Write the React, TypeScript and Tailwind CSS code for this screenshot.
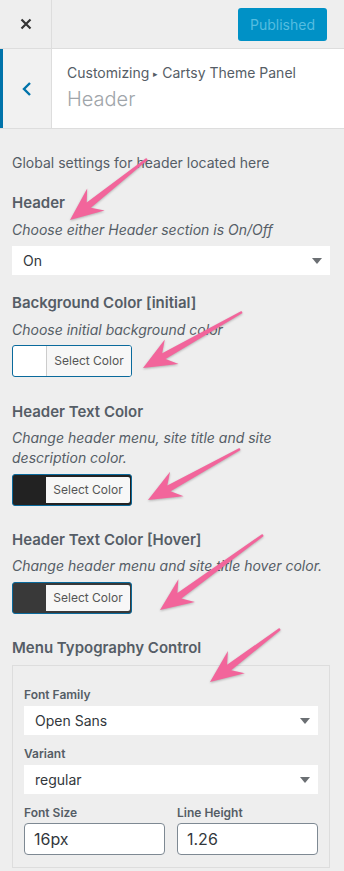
import React from "react";

type Pt = [number, number, number, number];

const arrows: Pt[] = [
  [147, 159, 70, 220],
  [242, 312, 143, 368],
  [240, 449, 148, 500],
  [263, 535, 160, 610],
  [280, 629, 210, 682],
];

function arrowPoints([x1, y1, x2, y2]: Pt): string {
  const dx = x2 - x1;
  const dy = y2 - y1;
  const len = Math.hypot(dx, dy);
  const ux = dx / len;
  const uy = dy / len;
  const nx = -uy;
  const ny = ux;
  const L = 30;
  const W = 14;
  const bx = x2 - ux * L;
  const by = y2 - uy * L;
  const sx = bx + ux * 6;
  const sy = by + uy * 6;
  const p = (x: number, y: number) => `${x.toFixed(1)},${y.toFixed(1)}`;
  return [
    p(x1 + nx * 1.2, y1 + ny * 1.2),
    p(sx + nx * 3.4, sy + ny * 3.4),
    p(bx + nx * W - ux * 3, by + ny * W - uy * 3),
    p(x2, y2),
    p(bx - nx * W - ux * 3, by - ny * W - uy * 3),
    p(sx - nx * 3.4, sy - ny * 3.4),
    p(x1 - nx * 1.2, y1 - ny * 1.2),
  ].join(" ");
}

const font = { fontFamily: "Inter, 'Noto Sans', sans-serif" };

function Caret() {
  return (
    <svg width="10" height="6" viewBox="0 0 10 6" className="shrink-0">
      <path d="M0 0 L10 0 L5 6 Z" fill="#6b6f73" />
    </svg>
  );
}

function SelectBox({ value }: { value: string }) {
  return (
    <div className="flex h-[29px] items-center justify-between bg-white pl-[11px] pr-[8px] text-[14px] text-[#32373c]">
      <span>{value}</span>
      <Caret />
    </div>
  );
}

function ColorButton({ color, dark }: { color: string; dark?: boolean }) {
  return (
    <div
      className="flex h-[32px] w-[120px] rounded-[3px] border border-[#0a6a9c] overflow-hidden"
      style={{ backgroundColor: color }}
    >
      <div className="w-[33px]" />
      {dark ? (
        <div className="my-[2px] mr-[1px] flex flex-1 items-center justify-center rounded-r-[2px] bg-[#f7f7f7] text-[12px] text-[#555]">
          Select Color
        </div>
      ) : (
        <div className="flex flex-1 items-center justify-center border-l border-[#ccc] bg-[#f7f7f7] text-[12px] text-[#555]">
          Select Color
        </div>
      )}
    </div>
  );
}

export default function App() {
  return (
    <div className="relative h-[871px] w-[344px] overflow-hidden bg-[#eeeeee]" style={font}>
      {/* top bar */}
      <div className="flex h-[49px] border-b border-[#dddddd] bg-[#eeeeee]">
        <div className="flex w-[52px] items-center justify-center border-r border-[#dddddd]">
          <svg width="12" height="12" viewBox="0 0 12 12">
            <path d="M1.5 1.5 L10.5 10.5 M10.5 1.5 L1.5 10.5" stroke="#333" strokeWidth="2.2" strokeLinecap="butt" />
          </svg>
        </div>
        <div className="flex flex-1 items-start justify-end pr-[17px] pt-[8px]">
          <div className="flex h-[33px] w-[89px] items-center justify-center rounded-[3px] bg-[#0091c6] text-[14px] text-[#55bde0]">
            Published
          </div>
        </div>
      </div>

      {/* panel header */}
      <div className="flex h-[80px] border-b border-[#dddddd] bg-white">
        <div className="w-[3px] bg-[#0073aa]" />
        <div className="flex w-[49px] items-center justify-center border-r border-[#dddddd] bg-[#f1f1f1]">
          <svg width="10" height="16" viewBox="0 0 10 16">
            <path d="M8 2 L2 8 L8 14" fill="none" stroke="#0073aa" strokeWidth="2.4" />
          </svg>
        </div>
        <div className="flex flex-col pl-[15px] pt-[15px]">
          <div className="text-[14px] leading-[18px] text-[#555d66]">
            Customizing <span className="text-[9px] align-[1px]">▸</span> Cartsy Theme Panel
          </div>
          <div className="mt-[2px] text-[20px] font-light leading-[28px] text-[#a0a5aa]">Header</div>
        </div>
      </div>

      {/* content */}
      <div className="px-[12px] text-[#555d66]">
        <div className="mt-[24px] text-[14px] leading-[20px]">Global settings for header located here</div>

        <div className="mt-[20px] text-[15px] font-semibold leading-[20px]">Header</div>
        <div className="mt-[7px] text-[14px] italic leading-[20px]">Choose either Header section is On/Off</div>
        <div className="mt-[6px] w-[318px]">
          <SelectBox value="On" />
        </div>

        <div className="mt-[18px] text-[15px] font-semibold leading-[20px]">Background Color [initial]</div>
        <div className="mt-[7px] text-[14px] italic leading-[20px]">Choose initial background color</div>
        <div className="mt-[5px]">
          <ColorButton color="#ffffff" />
        </div>

        <div className="mt-[25px] text-[15px] font-semibold leading-[20px]">Header Text Color</div>
        <div className="mt-[6px] text-[14px] italic leading-[20px]">
          Change header menu, site title and site
          <br />
          description color.
        </div>
        <div className="mt-[6px]">
          <ColorButton color="#222222" dark />
        </div>

        <div className="mt-[24px] text-[15px] font-semibold leading-[20px]">Header Text Color [Hover]</div>
        <div className="mt-[6px] whitespace-nowrap text-[14px] italic leading-[20px]">
          Change header menu and site title hover color.
        </div>
        <div className="mt-[6px]">
          <ColorButton color="#393939" dark />
        </div>

        <div className="mt-[24px] text-[15px] font-semibold leading-[20px]">Menu Typography Control</div>
        <div className="mt-[7px] w-[318px] border border-[#dddddd] px-[11px] pb-[12px] pt-[21px]">
          <div className="text-[12px] font-semibold leading-[16px]">Font Family</div>
          <div className="mt-[3px]">
            <SelectBox value="Open Sans" />
          </div>
          <div className="mt-[11px] text-[12px] font-semibold leading-[16px]">Variant</div>
          <div className="mt-[3px]">
            <SelectBox value="regular" />
          </div>
          <div className="mt-[11px] grid grid-cols-2 gap-x-[12px]">
            <div>
              <div className="text-[12px] font-semibold leading-[16px]">Font Size</div>
              <div className="mt-[2px] flex h-[32px] items-center rounded-[4px] border border-[#7e8993] bg-white pl-[9px] text-[16px] text-[#32373c]">
                16px
              </div>
            </div>
            <div>
              <div className="text-[12px] font-semibold leading-[16px]">Line Height</div>
              <div className="mt-[2px] flex h-[32px] items-center rounded-[4px] border border-[#7e8993] bg-white pl-[9px] text-[16px] text-[#32373c]">
                1.26
              </div>
            </div>
          </div>
        </div>
      </div>

      {/* annotation arrows */}
      <svg
        className="pointer-events-none absolute left-0 top-0"
        width="344"
        height="871"
        viewBox="0 0 344 871"
        style={{ filter: "drop-shadow(0 1px 1px rgba(0,0,0,0.25))" }}
      >
        {arrows.map((a, i) => (
          <polygon key={i} points={arrowPoints(a)} fill="#f2659b" strokeLinejoin="round" />
        ))}
      </svg>
    </div>
  );
}
